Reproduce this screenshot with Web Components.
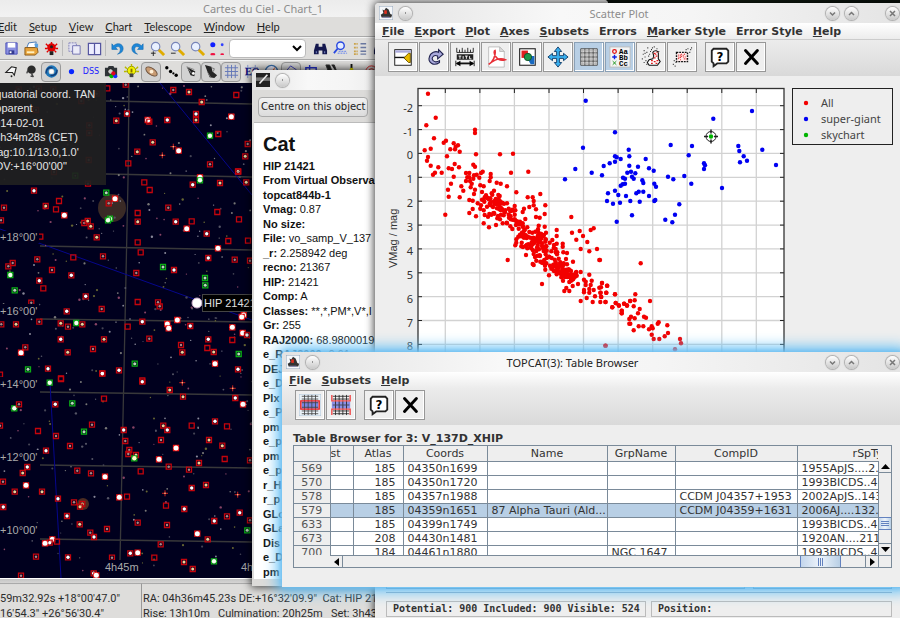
<!DOCTYPE html>
<html lang="en">
<head>
<meta charset="utf-8">
<title>Cartes du Ciel and TOPCAT</title>
<style>
html,body{margin:0;height:100%;overflow:hidden;background:#0b120c}
</style>
</head>
<body>
<astro-desktop></astro-desktop>
<script>
const ICONS = {
save:'<path d="M2 2h12v12H2z" fill="#8a8fe0" stroke="#4a4fb8"/><path d="M4 2h8v5H4z" fill="#fff"/><path d="M5 10h6v4H5z" fill="#333a90"/><path d="M6 11h2v2H6z" fill="#fff"/>',
print:'<path d="M5 2l8-1-1 6H3z" fill="#fff" stroke="#4577b5"/><path d="M1 7h13l1 5-3 3H1z" fill="#e8a33a" stroke="#8a5a1a"/><path d="M3 11h8v2H3z" fill="#fff0c0"/><path d="M11 3h4v4h-3z" fill="#5aa0e0"/>',
bug:'<path d="M2 3l3 3M14 3l-3 3M8 1v3M1 8h3M15 8h-3M3 12l2-2M13 12l-2-2" stroke="#e00000" stroke-width="1.5"/><circle cx="8" cy="7" r="4.5" fill="#e00000"/><circle cx="8" cy="6" r="1.6" fill="#222"/><path d="M6 11h4v4H6z" fill="#222"/>',
copy:'<path d="M2 2h8v9H2z" fill="#e2e2f2" stroke="#8080b8" stroke-dasharray="2 1"/><path d="M6 5h8v9H6z" fill="#ececf8" stroke="#7070b0"/>',
split:'<path d="M1.500 2.500h13v12h-13zM8 2.500v12" fill="#eef" stroke="#5656a0" stroke-width="1.300"/>',
undo:'<path d="M2 3v6h6L6 7c3-2 5-1 5 2 0 2-1 4-3 5 5-1 6-4 6-6 0-5-6-7-10-3z" fill="#1d87d8" stroke="#1266ac" stroke-width=".6"/>',
redo:'<path d="M14 3v6H8l2-2c-3-2-5-1-5 2 0 2 1 4 3 5-5-1-6-4-6-6 0-5 6-7 10-3z" fill="#1d87d8" stroke="#1266ac" stroke-width=".6"/>',
zin:'<path d="M9 9l6 6" stroke="#e0ac00" stroke-width="3"/><circle cx="6" cy="6" r="4.500" fill="#e8f0ff" stroke="#7784b8" stroke-width="1.200"/><path d="M1 13h5M3.500 11v5" stroke="#222"/>',
zout:'<path d="M9 9l6 6" stroke="#e0ac00" stroke-width="3"/><circle cx="6" cy="6" r="4.500" fill="#e8f0ff" stroke="#7784b8" stroke-width="1.200"/><path d="M1 13h5" stroke="#222"/>',
zoom:'<path d="M9 9l6 6" stroke="#e0ac00" stroke-width="3"/><circle cx="6" cy="6" r="4.500" fill="#e8f0ff" stroke="#7784b8" stroke-width="1.200"/>',
dots:'<circle cx="3" cy="4" r="2.700" fill="#1020ff"/><circle cx="13" cy="4" r="1.500" fill="#3040ff"/><ellipse cx="3" cy="14" rx="2.700" ry="1.300" fill="#f01040"/><ellipse cx="13" cy="14" rx="2" ry="1" fill="#f01040"/>',
bino:'<path d="M3 3h3v3h4V3h3l2 7v4h-5v-4H6v4H1v-4z" fill="#14184e"/><path d="M3 11h1v2H3zM12 11h1v2h-1z" fill="#8090d0"/>',
find:'<circle cx="8" cy="5" r="4" fill="#e4ecff" stroke="#2848e0" stroke-width="1.500"/><path d="M5 8l-4 5" stroke="#2848e0" stroke-width="2"/><path d="M5 13h10M6 11h9" stroke="#6080f0" stroke-dasharray="2 1"/>',
list:'<path d="M1 3h4M1 7h4M1 11h4M1 14h4" stroke="#caa24a" stroke-width="2" stroke-dasharray="2 .7"/><path d="M8 3h6M8 7h6M8 11h6M8 14h6" stroke="#6a78a0" stroke-width="1.500"/>',
poly:'<path d="M2 9l6-6 5 1-2 8-2-3z" fill="#f6f6f6" stroke="#222" stroke-width="1.200"/><circle cx="8" cy="13" r="1" fill="#222"/>',
spot:'<circle cx="8" cy="6" r="4.500" fill="#2b2b2b"/><path d="M8 10l2 4M4 7l-1 3M7 13h3" stroke="#444" stroke-width="1.500"/>',
galaxy:'<circle cx="8" cy="8" r="4.800" fill="none" stroke="#1f76b8" stroke-width="3.500"/><path d="M2 10c0-4 3-7 7-6M14 6c0 4-3 7-7 6" fill="none" stroke="#133c78" stroke-width="1.500"/><circle cx="8" cy="8" r="2.200" fill="#fff"/>',
dot:'<circle cx="8" cy="8" r="2.800" fill="#0a28ff"/>',
cam:'<path d="M1 4h3l1-2h5l1 2h3v9H1z" fill="#303438"/><circle cx="7" cy="8" r="3" fill="#ccc" stroke="#111"/><circle cx="8" cy="13" r="2.200" fill="#00b800"/><circle cx="12" cy="13" r="2.200" fill="#1030ff"/><circle cx="10" cy="10" r="2.200" fill="#e00020"/>',
bulb:'<path d="M1 3l2 2M15 3l-2 2M8 0v2M0 8h3M16 8h-3" stroke="#b8b800" stroke-width="1.500"/><circle cx="8" cy="7" r="4.500" fill="#f4f400" stroke="#929200"/><path d="M6 10h4v4H6z" fill="#444"/><path d="M7 5h2v4H7z" fill="#887000"/>',
neb:'<ellipse cx="8" cy="8" rx="7" ry="3.500" transform="rotate(35 8 8)" fill="#c89c74" stroke="#6e5440"/><circle cx="8" cy="8" r="2" fill="#fff0d8"/>',
trio:'<circle cx="3" cy="4" r="1.800"/><circle cx="7" cy="8" r="1.800"/><circle cx="10" cy="10" r="1.200"/><circle cx="13" cy="12" r="1.800"/>',
comet:'<path d="M3 3l9 5-1 5-4-1z" fill="#222"/><path d="M3 3l5 7M3 3l8 3" stroke="#888"/><circle cx="10" cy="10" r="1.500" fill="#fff"/>',
milky:'<path d="M1 1l7 2 1 5 5 4-3 3-5-1-2-5z" fill="#262626"/><path d="M8 4l3 1-1 3M4 9l3 5" stroke="#777" fill="none"/>',
grid:'<path d="M1 4h14M1 8h14M1 12h14M4 1v14M8 1v14M12 1v14" fill="none" stroke="#6276b8"/>',
eq:'<path d="M1 4h14M1 12h14M4 1v14M12 1v14" stroke="#8090c8"/><text x="1" y="12" font-size="11" font-weight="bold" font-family="Liberation Serif,serif" fill="#10107c">EQ</text>',
dial:'<circle cx="8" cy="8" r="6.500" fill="#eef" stroke="#3a6ea8" stroke-width="1.500"/><path d="M6 10l6-7-2 6z" fill="#e05a18"/>',
cons:'<path d="M2 8l5-6 6 4-2 7-8 1z" fill="none" stroke="#4040b8"/>',
box:'<path d="M2 4h11v9H2zM6 1v5" fill="none" stroke="#2430c8" stroke-width="1.500"/>',
moon:'<path d="M2 1h4l5 13H7zM8 1h3l4 11" fill="#222" stroke="#333"/>',
spark:'<path d="M8 0v14M2 8h12" stroke="#111" stroke-width="2"/><circle cx="8" cy="6" r="2" fill="#e8e000"/>',
target:'<circle cx="8" cy="8" r="6" fill="none" stroke="#d82020"/><circle cx="8" cy="8" r="3" fill="none" stroke="#d82020"/>',
topcat:'<rect width="16" height="16" rx="1" fill="#f5f7fa" stroke="#8298b0"/><path d="M2 10l3-2-1-4 2 1 2-3 3 2 2 5 2 1-1 3H3z" fill="#333"/><path d="M6 5h3v4H6z" fill="#e03020"/><path d="M4 13h8" stroke="#88a" stroke-width="1.500"/>',
chart:'<rect width="16" height="16" fill="#222"/><path d="M0 5h16v4H0z" fill="#777"/><path d="M4 12l9-10" stroke="#eee" stroke-width="1.800"/>',
axis:'<rect x="3" y="4" width="18" height="17" fill="#fff" stroke="#111"/><path d="M3 12.500h12" stroke="#111" stroke-width="1.500"/><path d="M3.500 6h17" stroke="#aaaadd" stroke-width="2.500"/><path d="M13 13l5-5h2v10h-2z" fill="#e6b800" stroke="#685200"/>',
replot:'<path d="M18 18c-7 5-13-1-11-6 1-5 7-7 10-5v-3l5 5-6 5v-3c-4-2-6 1-6 3 1 4 5 4 8 2z" fill="#aaaadc" stroke="#222450" stroke-width="1.200"/>',
title:'<path d="M3 2v5h18V2M6 4v3M9 2v5M12 4v3M15 2v5M18 4v3" fill="none" stroke="#222"/><rect x="3" y="9" width="18" height="6" fill="#222"/><path d="M5 11h3M6.500 11v3M10 11v3M12 11h3M13.500 11v3M17 11v3h2" stroke="#fff" fill="none"/><path d="M3 19h18" stroke="#111" stroke-width="2"/><path d="M2 19l5-3v6zM22 19l-5-3v6z"/><path d="M2 16v6M22 16v6" stroke="#111"/>',
pdf:'<path d="M4 1h12l5 5v17H4z" fill="#fff" stroke="#bbb"/><path d="M16 1l5 5h-5z" fill="#ddd" stroke="#bbb"/><path d="M4 20c4-2 8-9 7-15-3 1 1 13 11 10-6-3-13 1-18 5z" fill="none" stroke="#e83038" stroke-width="1.700"/>',
image:'<rect x="4" y="3" width="17" height="18" fill="#fff" stroke="#222" stroke-width="1.200"/><path d="M6 5h7v8H6z" fill="#e02020"/><path d="M11 11h9v9h-4z" fill="#1668c0"/><circle cx="13" cy="12" r="4" fill="#1c9848" stroke="#105028"/>',
move:'<path d="M12 1l4 5h-2.500v4.500H18V8l5 4-5 4v-2.500h-4.500V18H16l-4 5-4-5h2.500v-4.500H6V16l-5-4 5-4v2.500h4.500V6H8z" fill="#38b0f0" stroke="#123c68"/>',
pgrid:'<rect x="3" y="3" width="18" height="18" fill="#f3f3f3"/><path d="M3 3h18v18H3zM3 7.500h18M3 12h18M3 16.500h18M7.500 3v18M12 3v18M16.500 3v18" fill="none" stroke="#444"/><path d="M3 5.250h18M3 9.750h18M3 14.250h18M3 18.750h18M5.250 3v18M9.750 3v18M14.250 3v18M18.750 3v18" stroke="#999" stroke-width=".7"/>',
label:'<rect x="1" y="1" width="22" height="22" fill="#f3f3f3" stroke="#bbb"/><circle cx="6" cy="6" r="2" fill="none" stroke="#e01010" stroke-width="1.400"/><path d="M3.500 12h5M6 9.500v5" stroke="#1020e0" stroke-width="1.500"/><path d="M4 16.500l4 4M8 16.500l-4 4" stroke="#109010"/><text font-family="Liberation Mono,monospace" font-size="8" font-weight="bold"><tspan x="11" y="8.500">Aa</tspan><tspan x="11" y="15">Bb</tspan><tspan x="11" y="22">Cc</tspan></text>',
blob:'<path d="M4 5h1M8 2h1M12 4h1M15 1h1M3 9h1M7 7h1M2 14h1M5 12h1M9 11h1M4 18h1M7 20h1M11 6h1M10 9h1M18 3h1M20 6h1M6 16h1M13 2h1M5 8h1" stroke="#222" stroke-width="1.300"/><path d="M14 7c2-3 6-2 6 1v6l2 3-3 4h-9l-2-3 2-3 4-1 1-3z" fill="#fff" stroke="#111" stroke-width="1.200"/><path d="M15 8h2M18 7h1M17 11h2M15 13h2M12 16h2M15 17h2M18 16h2M12 19h2M17 19h2M16 9h2" stroke="#e02020" stroke-width="1.300"/>',
region:'<path d="M2 20h1M4 22h1M5 18h1M3 16h1M18 3h1M21 4h1M20 7h1M22 2h1M16 4h1" stroke="#222" stroke-width="1.200"/><path d="M6 7h12v10H6z" fill="#ffecec" stroke="#111" stroke-width="1.500" stroke-dasharray="2 1"/><path d="M8 14l8-6M8 10h3M10 15h2M13 12h3M14 14h3M11 9h2M8 12h3" stroke="#e02020" stroke-width="1.300" stroke-dasharray="1 1"/>',
help:'<path d="M5 3h14l2 2v12l-2 2H9l-4 3v-3l-2-2V5z" fill="#fff" stroke="#222" stroke-width="2"/><text x="12" y="16" text-anchor="middle" font-family="DejaVu Sans,sans-serif" font-weight="bold" font-size="13">?</text>',
close:'<path d="M6 5l13 14M19 5L6 19" stroke="#000" stroke-width="3.200" stroke-linecap="round"/>',
rowsel:'<rect x="0" y="0" width="24" height="24" fill="#e9f1f7" stroke="#a8c0d4"/><path d="M3 8h18v8H3z" fill="#7884e0"/><path d="M3 2.500h18M3 5.500h18M3 9.500h18M3 14.500h18M3 18.500h18M3 21.500h18M6 1v22M10 1v22M14 1v22M18 1v22" stroke="#444" stroke-width=".9"/><path d="M2 7.500h20v9H2z" fill="none" stroke="#e81818" stroke-width="1.500"/>',
rowuns:'<path d="M2 8h20v8H2z" fill="#8890e4"/><path d="M3 2.500h18M3 5.500h18M3 18.500h18M3 21.500h18M6 1v22M10 1v22M14 1v22M18 1v22" stroke="#222" stroke-width=".9"/><path d="M3 12h18" stroke="#445"/><path d="M2 1v6.500h20V1M2 23v-6.500h20V23" fill="none" stroke="#f04848" stroke-width="1.500"/>'
};
const icon = (n, size, box) => `<svg width="${size}" height="${size}" viewBox="0 0 ${box} ${box}" aria-hidden="true">${ICONS[n]}</svg>`;
const mount = (el, html) => { el.attachShadow({mode:'open'}).innerHTML = html; };
function rng(seed){ return () => (seed = (seed * 16807) % 2147483647) / 2147483647; }

customElements.define('tool-button', class extends HTMLElement {
  connectedCallback(){
    const big = this.hasAttribute('big'), n = this.getAttribute('icon');
    mount(this, `<style>
      :host{display:block;flex:none}
      button{display:grid;place-items:center;width:20px;height:20px;padding:0;border:1px solid transparent;border-radius:4px;background:none}
      :host([on]) button{border-color:#999;background:#d2d2d2}
      :host([big]) button{width:30px;height:30px;border:1px solid #979797;border-radius:0;background:#efefef;box-shadow:inset -1px -1px #fff}
      :host([big][on]) button{background:#b8cfe5;border-color:#8aa0b6}
      svg{display:block}
      span{font:8px "DejaVu Sans",sans-serif;color:#1a1aff}
    </style><button type="button" aria-label="${n}" ${this.hasAttribute('on') ? 'aria-pressed="true"' : ''}>${
      n === 'dss' ? '<span>DSS</span>' : icon(n, big ? 22 : 15, big ? 24 : 16)}</button>`);
  }
});

customElements.define('menu-strip', class extends HTMLElement {
  connectedCallback(){
    mount(this, `<style>
      :host{display:flex;flex:none}
      button{font:inherit;color:inherit;border:0;padding:0;background:none;white-space:nowrap}
    </style>` + this.getAttribute('items').split('|').map(t =>
      `<button type="button">${t.replace(/_(.)/, '<u>$1</u>')}</button>`).join(''));
  }
});

customElements.define('app-window', class extends HTMLElement {
  connectedCallback(){
    const ctl = d => `<button type="button" aria-label="window control"><svg width="13" height="13" viewBox="0 0 13 13"><path d="${d}" fill="none" stroke="#777" stroke-width="1.500"/></svg></button>`;
    const bare = this.hasAttribute('bare');
    mount(this, `<style>
      :host{display:flex;flex-direction:column;box-sizing:border-box;background:#e9e9e9;border-radius:4px 4px 0 0;box-shadow:0 0 8px 1px rgba(0,0,0,.75)}
      header{display:flex;align-items:center;gap:6px;height:20px;flex:none;padding:0 5px 0 4px;background:linear-gradient(90deg,#e2e2e2,#f8f8f8 35%,#f5f5f5 60%,#e4e4e4);border-radius:4px 4px 0 0;font:11px "Noto Sans",sans-serif;color:#8c8c8c}
      :host([active]) header{color:#222}
      h1{flex:1;margin:0;font:inherit;text-align:center;white-space:nowrap;overflow:hidden}
      :host([bare]) header{height:17px;padding-right:70px;background:linear-gradient(#ececec,#f2f2f2)}
      button{width:13px;height:13px;flex:none;padding:0;border:0;border-radius:50%;background:linear-gradient(#fff,#c8c8c8);box-shadow:0 0 1px 1px #aaa}
      button svg{display:block}
      .last{display:flex;margin-left:22px}
      .body{flex:1;min-height:0;display:flex;flex-direction:column}
    </style><header>${bare ? '' : icon(this.getAttribute('icon'), 14, 16) + ctl('M6 6h1')}
      <h1>${this.getAttribute('heading')}</h1>
      ${bare || this.hasAttribute('plain') ? '' : ctl('M4 5.500l2.500 2.500 2.500-2.500') + ctl('M4 8l2.500-2.500L9 8') + '<span class="last">' + ctl('M4 4l5 5M9 4l-5 5') + '</span>'}
    </header><div class="body"><slot></slot></div>`);
  }
});

/* Catalogue objects as x,y,kind. Kinds: r boxed star, e empty box, w bright boxed, W very bright,
   g green box, G bright green, y yellow star in red box, p plus mark. Units are thirds of a pixel. */
const SKY = [
 [0,`322 265e,377 254r,520 270r,567 276y,709 285e,605 306y,381 341w,349 362y,502 360w,588 342w,588 360y,443 360W,448 365e,694 350W,630 407G,655 402e,458 427y,412 455y,536 452W,385 490e,743 432r,736 469y,630 493r,714 514y,520 440p,487 466p,244 303d,160 268d,116 266d,268 376d,268 399d,266 480d,226 527h,72 338d,162 516d,290 281d,56 268d,108 330d,86 488d`],
 [170,`264 41d,102 62w,177 93e,137 108y,168 118e,193 136W,12 113r,3 151r,253 159r,263 153y,272 169y,290 202y,319 68g,345 86W,326 100r,330 146G,324 151G,433 37e,449 60e,578 44w,600 22W,600 31G,660 39y,739 37y,715 5r,505 113r,652 126e,717 148e,413 129e,413 155y,527 155w,575 154e,560 176W,620 191w,413 217e,685 213e,744 212e,654 235W,422 247e,625 264w,704 269r,750 272r,112 268r,220 262e,309 259r,38 279r,25 289r,156 300r,31 315G,118 332w,214 316w,130 355e,44 361g,257 379w,305 417r,489 291g,522 300w,409 309r,615 324g,616 346g,413 396e,474 397r,479 409r,94 398r,200 424w,182 460y,204 470r,229 459G,247 463y,4 463r,48 463y,118 455r,427 455w,383 470e,532 450W,502 462W,506 475W,571 468w,697 472W,697 510e,731 435W,725 441W,728 489W,741 495w,448 506r,182 508w,312 508y,76 532r,63 548W,203 547y,279 537r,543 525r,547 547y,622 534e,625 508w,641 546y,645 581W,716 552g,404 581g,84 598g,144 596w,307 610w,357 601w,183 625e,714 598w,427 631e,121 200e,0 614e`],
 [370,`149 38G,183 27e,307 11w,427 35w,312 86e,166 103w,217 100g,43 115G,57 103r,0 167r,114 183e,276 164r,252 185g,168 198r,210 228r,138 242w,509 60y,549 80y,547 38p,698 55p,706 84w,729 103W,645 154w,575 167e,681 169e,490 167y,502 180w,371 180w,483 210r,376 213r,388 240r,385 252r,408 255y,403 265G2,627 210y,667 227y,528 234W,477 268W,674 267e,597 279y,506 290r,567 299r,422 304e,750 271r,232 302r,273 310r,315 320W,68 309y,82 291w,9 335r,44 365y,78 346W,126 365y,174 386w,222 397r,247 402y,240 410y,201 438w,10 411w,358 382W,381 380e,498 407e,495 370p,575 354w,618 345y,553 417w,713 374p,719 428w,501 465r,681 439r,643 453w,750 451r,742 481g,413 458r,239 463y,321 477r,271 488r,282 501w,157 508W,149 518w,135 520W,171 515e,592 491W,623 508y,482 523r,463 563e,552 576y,578 597y,642 574G,391 550w,413 548W,204 562w,108 560r,336 563r,63 617r,281 610w,289 616W`]
];
customElements.define('sky-map', class extends HTMLElement {
  connectedCallback(){
    let s = ''; const R = rng(77);
    for (let i = 0; i < 330; i++) {
      const x = R()*252, y = 84 + R()*493, c = ['#777','#556','#846','#663','#445','#889'][i%6];
      s += `<circle cx="${x.toFixed(1)}" cy="${y.toFixed(1)}" r="${(.6+R()*.6).toFixed(1)}" fill="${c}"/>`;
    }
    for (const [oy, list] of SKY) for (const it of list.split(',')) {
      const m = it.match(/(\d+) (\d+)(.*)/), x = +(m[1]/3).toFixed(1), y = +(oy + m[2]/3).toFixed(1), k = m[3];
      if (k === 'p') { s += `<path d="M${x-3} ${y}h6M${x} ${y-3}v6" stroke="#d02020"/><circle cx="${x}" cy="${y}" r=".8" fill="#fc8"/>`; continue; }
      const green = /[gGh]/.test(k);
      s += `<path d="M${x-2.5} ${y-2.5}h5v5h-5z" fill="none" stroke="${green ? '#0aae14' : k === 'W' ? '#f01010' : '#c4040c'}" stroke-width="1.3"/>`;
      const [r, f] = ({r:[1.2,'#a88'],w:[1.7,'#fff'],W:[2.5,'#fff'],g:[1.5,'#bdb'],G:[2.2,'#f4fff0'],G2:[2.2,'#ffc'],y:[1.5,'#ecd49c'],d:[1.2,'#a88'],h:[1,'#898']})[k] || [0,''];
      if (r) s += `<circle cx="${x}" cy="${y}" r="${r}" fill="${f}"/>`;
    }
    mount(this, `<style>
      :host{display:block;position:relative;overflow:hidden;background:#00001e}
      svg{display:block;width:100%;height:100%}
      .legend{position:absolute;left:0;top:0;width:122px;height:102px;box-sizing:border-box;padding:5px 0 12px 4px;background:rgba(32,32,32,.93);display:flex;flex-direction:column;justify-content:space-between;font:11px/13px "Liberation Sans",Arial,sans-serif;color:#e4e4e4;white-space:nowrap}
      text{font:11px "Liberation Sans",Arial,sans-serif;fill:#aaa}
      .hip{fill:#e0e0e0}
    </style>
    <svg><g transform="translate(16,-83)">
      <g fill="none" stroke="#38383a" stroke-width="1.3"><path d="M129 83L128 180L124 370L120 560M106 101L252 104M106 174L252 177M40 246L252 250M40 319L252 322M40 392L252 395M40 465L252 468M40 539L252 542"/></g>
      <path d="M160 83L252 195M0 229L252 320M50 383L61 578" fill="none" stroke="#06068c"/>
      <circle cx="112" cy="208" r="14" fill="#3a2a26"/><circle cx="83" cy="504" r="6" fill="#4c2c22"/>
      ${s}
      <circle cx="197" cy="303" r="5" fill="#fff" stroke="#c8a8c8"/>
      <rect x="202.500" y="294.500" width="60" height="17" fill="#000" stroke="#444"/><text class="hip" x="204" y="307">HIP 21421</text>
      <g fill="#00001e"><rect x="0" y="231" width="39" height="12"/><rect x="0" y="304" width="39" height="12"/><rect x="0" y="377" width="39" height="12"/><rect x="0" y="450" width="39" height="12"/><rect x="0" y="524" width="39" height="12"/><rect x="104" y="560" width="34" height="13"/></g>
      <text x="0" y="241">+18°00'</text><text x="0" y="315">+16°00'</text><text x="0" y="388">+14°00'</text><text x="0" y="461">+12°00'</text><text x="0" y="534">+10°00'</text>
      <text x="105" y="571">4h45m</text><text x="241" y="571">4h</text>
    </g></svg>
    <div class="legend"><span>Equatorial coord. TAN</span><span>Apparent</span><span>2014-02-01</span><span>15h34m28s (CET)</span><span>Mag:10.1/13.0,1.0'</span><span>FOV:+16°00'00"</span></div>`);
  }
});

customElements.define('chart-app', class extends HTMLElement {
  connectedCallback(){
    const row = t => t.split(' ').map(n => n === '|' ? '<i></i>' : n === 'combo' ? '<select aria-label="Search"><option></option></select>' :
      `<tool-button icon="${n.replace('*','')}" ${n.endsWith('*') ? 'on' : ''}></tool-button>`).join('');
    mount(this, `<style>
      :host{display:flex;flex-direction:column;flex:1;min-height:0;background:#dedddb}
      menu-strip{height:19px;align-items:center;gap:12px;padding-left:14px;font:11px Lato,sans-serif;color:#222}
      .bar{display:flex;align-items:center;height:23px;box-sizing:border-box;border-top:1px solid #aaa;box-shadow:inset 0 1px #f4f4f4;padding-left:17px;flex:none}
      .bar+.bar{height:24px}
      .bar i{width:1px;height:16px;margin:0 1px;background:#bbb}
      select{width:77px;height:19px;margin:0 4px 0 2px;border:1px solid #bbb;border-radius:4px;background:#fff;flex:none}
      sky-map{flex:1;min-height:0}
      footer{display:grid;grid-template-columns:157px 1fr;height:40px;box-sizing:border-box;border-top:1px solid #fff;padding-top:4px;background:linear-gradient(#c4c4c4,#dedddb 6px);font:11px/15px Roboto,sans-serif;color:#2c2c2c;white-space:pre}
      footer div{padding:7px 0 0 16px;border-top:1px solid #aaa;overflow:hidden}
      footer div+div{border-left:1px solid #999;padding-left:1px}
      p{margin:0}
    </style>
    <menu-strip items="_Edit|_Setup|_View|_Chart|_Telescope|_Window|_Help"></menu-strip>
    <div class="bar">${row('save print bug | copy split | undo redo zin zout zoom dots combo bino find list bino')}</div>
    <div class="bar">${row('poly spot galaxy* dot dss cam bulb neb* trio comet* milky* grid* eq dial cons* box moon spark target')}</div>
    <sky-map></sky-map>
    <footer><div><p>59m32.92s +18°00'47.0"</p><p>16'54.3" +26°56'30.4"</p></div><div><p>RA: 04h36m45.23s DE:+16°32'09.9"  Cat: HIP 214</p><p>Rise: 13h10m   Culmination: 20h25m   Set: 3h43</p></div></footer>`);
  }
});

const INFO = [['HIP 21421'],['From Virtual Observa'],['topcat844b-1'],['Vmag:','0.87'],['No size:'],['File:','vo_samp_V_137'],['_r:','2.258942 deg'],['recno:','21367'],['HIP:','21421'],['Comp:','A'],['Classes:','**,*,PM*,V*,I'],['Gr:','255'],['RAJ2000:','68.9800019'],['e_RAJ2000:','0.61'],['DEJ'],['e_D'],['Plx'],['e_P'],['pm'],['e_p'],['pm'],['e_p'],['r_H'],['r_p'],['GLo'],['GLa'],['Dis'],['e_D'],['pm']];
customElements.define('object-info', class extends HTMLElement {
  connectedCallback(){
    mount(this, `<style>
      :host{display:flex;flex-direction:column;flex:1;min-height:0;background:#dcdbd9;padding:0 0 7px 2px}
      .top{flex:none;padding:6px 4px 5px;border-bottom:1px solid #bbb}
      button{height:20px;width:110px;padding:0 2px;border:1px solid #aaa;border-radius:4px;background:linear-gradient(#f2f2f2,#dcdcdc);font:10px "DejaVu Sans",sans-serif;color:#222;white-space:nowrap}
      section{flex:1;min-height:0;display:flex;flex-direction:column;background:#fff;padding:9px 0 0 9px;overflow:hidden;font:11px/13px "Liberation Sans",Arial,sans-serif;color:#111;white-space:nowrap}
      h2{margin:0 0 4px;font:bold 20px/24px "Liberation Sans",Arial,sans-serif}
      div.lines{flex:1;display:flex;flex-direction:column;justify-content:space-between}
      p{margin:0}
    </style><div class="top"><button type="button">Centre on this object</button></div>
    <section><h2>Cat</h2><div class="lines">${INFO.map(([a,b]) => `<p><b>${a}</b>${b ? ' ' + b : ''}</p>`).join('')}</div></section>`);
  }
});

/* Star samples, thirds of a pixel from (380,80) for the A lists and from (600,80) for the B lists. */
const RED_A = '144 41,167 113,139 136,162 175,134 211,152 206,144 231,141 242,198 182,191 188,221 190,234 196,227 200,211 208,225 208,239 215,285 149,285 159,288 223,360 223,399 221,152 257,175 262,165 278,159 284,185 278,201 229,206 265,216 267,224 252,237 262,221 290,213 311,204 329,206 350,244 319,250 332,239 352,280 254,285 260,258 279,268 279,258 303,262 292,268 292,282 286,290 284,308 275,303 279,332 282,332 292,298 293,280 296,270 303,275 311,272 322,285 329,282 342,268 360,278 362,293 370,278 387,268 399,196 404,288 409,301 386,311 391,314 352,311 360,306 336,301 316,311 319,329 303,350 308,362 311,381 319,342 332,337 344,355 345,327 358,332 366,332 376,352 365,366 368,381 370,404 378,393 278,445 275,409 337,443 352,458 352,461 363,461 376,481 342,496 376,494 402,468 388,448 381,432 386,428 396,468 411,479 413,311 430,327 442,348 435,314 405,324 410,334 404,342 399,368 430,381 430,391 439,404 404,406 391,391 394,383 540,438 525,458 552,461 555,487 545,481 545,486 612,507 586,530 450,530 468,574 411,576 458,599 453,609 468,589 479,632 450,641 445,622 486,602 507,628 514,651 507,658 540,579 545,561 519,550 517,548 491,548 500,530 491,517 480,509 488,527 507,527 517,514 514,558 537,561 553,409 478,409 488,406 496,424 499,425 488,445 493,494 440,497 478,476 437,474 448,466 455,484 463,484 475,498 458,553 633,559 624,568 633,602 663,620 654,638 666,645 649,658 623,661 638,664 651,661 666,677 666,679 638,682 617,666 609,628 584,635 602,632 615,628 627,628 638,641 630,612 630,612 599,617 615,602 576,589 576,594 612,697 682,705 643,707 669,717 677,725 692,725 700,733 671,741 677,677 797,750 663,748 717,748 731,612 637,617 605,578 618,569 571';
const RED_B = '0 540,122 550,6 609,21 617,3 622,2 638,19 638,3 650,16 666,37 682,45 643,47 669,56 676,72 671,81 676,91 663,104 661,106 643,150 663,101 679,119 687,114 700,65 692,65 700,93 710,91 731,104 715,132 710,138 713,116 739,130 739,101 751,147 748,155 739,158 745,176 727,173 731,202 736,204 759,194 769,155 764,161 777,178 777,240 777,243 790,16 797,225 808';
const BLUE_A = '617 62,705 157,609 203,586 267,555 298,635 278,671 258,666 286,689 250,684 340,681 363,699 371,710 425';
const BLUE_B = '456 93,340 116,212 195,276 198,266 226,415 198,418 213,431 229,420 247,441 242,487 209,528 255,366 324,312 250,315 256,312 267,253 288,274 311,204 290,220 298,238 373,225 404,196 419,217 427,86 209,88 229,137 237,147 265,161 272,114 260,88 257,106 280,82 278,93 275,96 290,101 296,127 301,130 309,163 311,168 320,147 348,166 360,163 363,119 365,91 363,78 348,96 406,109 340,116 335,130 335,69 293,75 296,75 311,68 313,62 317,45 229,50 232,62 237,45 245,45 332,55 345,60 368';
customElements.define('scatter-plot', class extends HTMLElement {
  connectedCallback(){
    const dots = (list, ox, c) => list.split(',').map(p => { const [a,b] = p.split(' '); return `<circle cx="${(ox+a/3).toFixed(1)}" cy="${(80+b/3).toFixed(1)}" r="2.2" fill="${c}"/>`; }).join('');
    const path = [[275,300],[305,340],[335,370],[355,392],[392,410],[425,445],[460,475],[490,510],[525,555],[555,582],[590,600]];
    const R = rng(4242); let extra = [];
    for (let i = 0; i < 225; i++) {
      const t = (.12 + .86*Math.pow(R(), .7)) * (path.length-1), k = Math.min(path.length-2, Math.floor(t)), f = t-k;
      const w = k < 2 ? 34 : k < 5 ? 34 : k < 8 ? 40 : 22, d = (R()+R()-1)*w;
      extra.push(`${Math.round(path[k][0]+(path[k+1][0]-path[k][0])*f + d*.8)} ${Math.round(path[k][1]+(path[k+1][1]-path[k][1])*f - d*.7)}`);
    }
    let g = '', t = '', l = '';
    for (let i = 0; i < 10; i++) { const x = (445.3+i*34.56).toFixed(1); g += `M${x} 89V420`; t += `M${x} 89v4`; }
    for (let i = 0; i < 13; i++) { const y = 105.7+i*23.87; g += `M418 ${y.toFixed(1)}H784`; t += `M418 ${y.toFixed(1)}h4M784 ${y.toFixed(1)}h-4`; if (i < 11) l += `<text x="413" y="${Math.round(y+6)}" text-anchor="end">${i-2}</text>`; }
    const leg = (c, n) => `<li><svg width="6" height="6"><circle cx="3" cy="3" r="2.200" fill="${c}"/></svg>${n}</li>`;
    mount(this, `<style>
      :host{display:flex;align-items:flex-start;gap:4px;overflow:hidden;background:#eee}
      .plot{flex:1;min-width:0;height:100%;display:block}
      text{font:11px "Noto Sans",sans-serif;fill:#333}
      .axis{font:11px "Liberation Sans",Arial,sans-serif}
      ul{flex:none;box-sizing:border-box;width:101px;margin:12px 11px 0 0;padding:6px 0 1px 10px;border:1px solid #222;list-style:none;font:11px/16px "Noto Sans",sans-serif;color:#444}
      li{display:flex;align-items:center;gap:12px}
    </style>
    <svg class="plot"><g transform="translate(-375,-76)">
      <rect x="418" y="88.500" width="366" height="340" fill="#fff"/>
      <path d="${g}" stroke="#d2d2d2" stroke-width="1.300"/>
      ${dots(RED_A,380,'#f20000')}${dots(extra.join(','),380,'#f20000')}${dots(RED_B,600,'#f20000')}
      ${dots(BLUE_A,380,'#0000f2')}${dots(BLUE_B,600,'#0000f2')}
      <circle cx="711" cy="136.500" r="2.200" fill="#00b400"/><circle cx="711" cy="136.500" r="5" fill="none" stroke="#222"/><path d="M704 136.500h4M714 136.500h4M711 129.500v4M711 139.500v4" stroke="#222" stroke-width="1.500"/>
      <path d="${t}" stroke="#222"/><rect x="418" y="88.500" width="366" height="340" fill="none" stroke="#333" stroke-width="1.300"/>
      ${l}<text class="axis" transform="translate(397,268) rotate(-90)">VMag / mag</text>
    </g></svg>
    <ul>${leg('#f20000','All')}${leg('#0000f2','super-giant')}${leg('#00b400','skychart')}</ul>`);
  }
});

const TOOLCSS = `
  menu-strip{height:16px;align-items:center;gap:10px;padding-left:7px;background:linear-gradient(#fff,#ececec);font:bold 11px "DejaVu Sans",sans-serif;color:#333}
  nav{display:flex;gap:1px;flex:none;background:linear-gradient(#ececec,#d9d9d9)}
  .gap{width:6px}`;
customElements.define('scatter-app', class extends HTMLElement {
  connectedCallback(){
    const b = n => `<tool-button big icon="${n.replace('*','')}" ${n.endsWith('*') ? 'on' : ''}></tool-button>`;
    mount(this, `<style>${TOOLCSS}
      :host{display:flex;flex-direction:column;flex:1;min-height:0;background:#eee}
      nav{padding:2px 0 4px 13px;border-top:1px solid #ccc;height:30px}
      scatter-plot{flex:1;min-height:0}
      .fit,.status{display:grid;gap:8px;flex:none;margin:0 12px 0 11px}
      .fit{grid-template-columns:357fr 138fr;height:12px;box-sizing:border-box;margin-bottom:8px;border-bottom:1px solid #9ab}
      .fit div{height:7px;border:1px solid #5a7a99;border-top:0}
      .status{grid-template-columns:260fr 241fr;gap:5px;margin-bottom:1px;font:bold 10px/14px "DejaVu Sans Mono",monospace;color:#333;white-space:nowrap}
      .status div{border:1px solid #bbb;padding-left:6px;overflow:hidden}
    </style>
    <menu-strip items="_File|_Export|_Plot|_Axes|_Subsets|Errors|_Marker Style|Error Style|_Help"></menu-strip>
    <nav>${['axis','replot','title','pdf','image','move','pgrid*','label*','blob','region'].map(b).join('')}<span class="gap"></span>${b('help')}${b('close')}</nav>
    <scatter-plot></scatter-plot>
    <div class="fit"><div></div><div></div></div>
    <div class="status"><div>Potential: 900 Included: 900 Visible: 524</div><div>Position:</div></div>`);
  }
});

const ROWS = [
 ['569','185','04350n1699','','','','1955ApJS....2..'],
 ['570','185','04350n1720','','','','1993BICDS..43'],
 ['578','185','04357n1988','','','CCDM J04357+1953','2002ApJS..143'],
 ['579','185','04359n1651','87 Alpha Tauri (Ald...','','CCDM J04359+1631','2006AJ....132..'],
 ['633','185','04399n1749','','','','1993BICDS..43'],
 ['673','208','04430n1481','','','','1920AN....211'],
 ['700','184','04461n1880','','NGC 1647','','1993BICDS..43']];
customElements.define('table-browser', class extends HTMLElement {
  connectedCallback(){
    mount(this, `<style>${TOOLCSS}
      :host{display:flex;flex-direction:column;flex:1;min-height:0;background:#eee}
      nav{padding:2px 0 5px 13px;height:30px}
      h2{margin:7px 0 0 11px;font:bold 11px/13px "DejaVu Sans",sans-serif;color:#333}
      .frame{display:grid;grid-template-columns:minmax(0,1fr) 13px;grid-template-rows:minmax(0,1fr) 12px;flex:1;min-height:0;margin:0 12px 19px 11px;border:1px solid #7a8a99}
      .view{overflow:hidden}
      table{table-layout:fixed;width:658px;border-collapse:collapse;font:11px "DejaVu Sans",sans-serif;color:#333}
      th,td{height:14px;line-height:13px;box-sizing:border-box;padding:0 4px;border:1px solid #7a8a99;border-width:0 1px 1px 0;font-weight:normal;text-align:left;white-space:nowrap;overflow:hidden;background:#fff}
      thead th{height:15px;background:#eee;text-align:center}
      tbody th{background:#eee;text-align:center;color:#555}
      .sel td{background:#b8cfe5}
      thead .cut{padding:0;text-align:left}
      td.n{text-align:right;padding-right:7px}
      .v,.h{background:#eee;display:flex;align-items:center;justify-content:space-between}
      .v{flex-direction:column;margin-top:15px;border-left:1px solid #7a8a99}
      .h{margin-left:36px;border-top:1px solid #7a8a99}
      .corner{border-left:1px solid #7a8a99;border-top:1px solid #7a8a99}
      button{flex:none;width:12px;height:11px;padding:0;border:0;background:#eee;display:grid;place-items:center}
      .track{flex:1;align-self:stretch;box-sizing:border-box;border:1px solid #7a8a99;display:flex;border-bottom:0}
      .h .track{justify-content:flex-end;padding-right:24px;border-top:0}
      .v .track{flex-direction:column;justify-content:flex-end;padding-bottom:13px;border-left:0;border-right:0;border-bottom:1px solid #7a8a99}
      .thumb{width:39px;background:linear-gradient(90deg,#c4d6ec,#eef4fb,#b8cfe5);border:1px solid #6382bf;border-width:0 1px;display:grid;place-items:center}
      .v .thumb{width:auto;height:11px;border-width:1px 0}
      .thumb svg{display:block}
    </style>
    <menu-strip items="_File|_Subsets|_Help"></menu-strip>
    <nav><tool-button big icon="rowsel"></tool-button><tool-button big icon="rowuns"></tool-button><span class="gap"></span><tool-button big icon="help"></tool-button><tool-button big icon="close"></tool-button></nav>
    <h2>Table Browser for 3: V_137D_XHIP</h2>
    <div class="frame"><div class="view"><table>
      <colgroup><col style="width:36px"><col style="width:23px"><col style="width:50px"><col style="width:84px"><col style="width:120px"><col style="width:68px"><col style="width:122px"><col style="width:155px"></colgroup>
      <thead><tr><th></th><th class="cut">st</th><th>Atlas</th><th>Coords</th><th>Name</th><th>GrpName</th><th>CompID</th><th>rSpType</th></tr></thead>
      <tbody>${ROWS.map(r => `<tr${r[0]==='579' ? ' class="sel"' : ''}><th scope="row">${r[0]}</th><td></td><td class="n">${r[1]}</td>${r.slice(2).map(c => `<td>${c}</td>`).join('')}</tr>`).join('')}</tbody>
    </table></div>
    <div class="v"><button type="button" aria-label="up"><svg width="9" height="6"><path d="M0 5L4.500 0 9 5z"/></svg></button><div class="track"><div class="thumb"><svg width="8" height="6"><path d="M0 .5h8M0 2.500h8M0 4.500h8" stroke="#6382bf"/></svg></div></div><button type="button" aria-label="down"><svg width="9" height="6"><path d="M0 0L4.500 5 9 0z"/></svg></button></div>
    <div class="h"><button type="button" aria-label="left"><svg width="5" height="8"><path d="M5 0L0 4l5 4z"/></svg></button><div class="track"><div class="thumb"><svg width="6" height="8"><path d="M.5 0v8M2.500 0v8M4.500 0v8" stroke="#6382bf"/></svg></div></div><button type="button" aria-label="right"><svg width="5" height="8"><path d="M0 0l5 4-5 4z"/></svg></button></div>
    <div class="corner"></div></div>`);
  }
});

customElements.define('astro-desktop', class extends HTMLElement {
  connectedCallback(){
    mount(this, `<style>
      :host{display:block;position:relative;height:100vh;overflow:hidden;background:linear-gradient(90deg,#0a120c 70%,#142014 80%,#0a120c)}
      app-window{position:absolute}
      .chart{left:-16px;right:292px;top:0;bottom:0}
      .info{left:252px;top:70px;bottom:32px;width:160px}
      .scatter{left:375px;right:-4px;top:3px;bottom:0}
      .table{left:282px;right:-4px;top:352px;bottom:31px;box-shadow:0 0 14px 5px #62c0f6,0 0 4px 1px #9bd}
    </style>
    <app-window class="chart" bare heading="Cartes du Ciel - Chart_1"><chart-app></chart-app></app-window>
    <app-window class="info" plain icon="chart" heading=""><object-info></object-info></app-window>
    <app-window class="scatter" icon="topcat" heading="Scatter Plot"><scatter-app></scatter-app></app-window>
    <app-window class="table" active icon="topcat" heading="TOPCAT(3): Table Browser"><table-browser></table-browser></app-window>`);
  }
});
</script>
</body>
</html>
